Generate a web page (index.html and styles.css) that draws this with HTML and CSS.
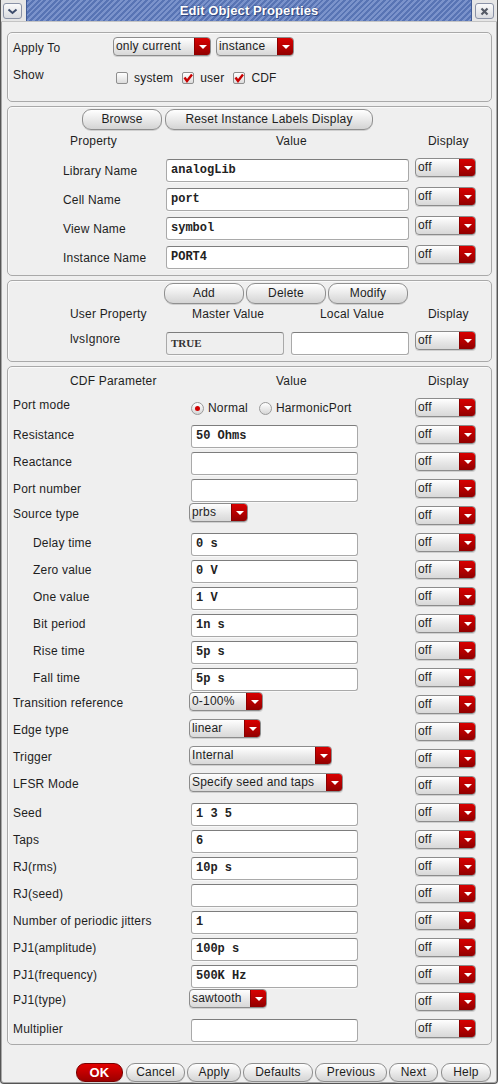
FILE: index.html
```html
<!DOCTYPE html>
<html>
<head>
<meta charset="utf-8">
<title>Edit Object Properties</title>
<link rel="stylesheet" href="styles.css">
</head>
<body>
<div class="window">
  <div class="titlebar">
    <div class="tb-side tb-left">
      <div class="tb-btn"><svg width="11" height="7" viewBox="0 0 11 7"><path d="M1.5 1.5 L5.5 5 L9.5 1.5" fill="none" stroke="#3d4c6c" stroke-width="2"/></svg></div>
    </div>
    <div class="tb-title">Edit Object Properties</div>
    <div class="tb-side tb-right">
      <div class="tb-btn"><svg width="9" height="9" viewBox="0 0 9 9"><path d="M1.5 1.5 L7.5 7.5 M7.5 1.5 L1.5 7.5" fill="none" stroke="#555a66" stroke-width="2.2"/></svg></div>
    </div>
  </div>

  <div class="content">
    <section class="box box-apply">
      <div class="a-row1">
        <div class="a-label a-label1">Apply To</div>
        <div class="dd w-only"><span class="dd-text">only current</span><span class="dd-arrow"><i></i></span></div>
        <div class="dd w-inst"><span class="dd-text">instance</span><span class="dd-arrow"><i></i></span></div>
      </div>
      <div class="a-row2">
        <div class="a-label">Show</div>
        <div class="checks">
          <label class="check"><span class="cb"></span>system</label>
          <label class="check"><span class="cb"><svg width="10" height="10" viewBox="0 0 10 10"><path d="M1.5 4.5 L4 8 L9 1.5" fill="none" stroke="#c80000" stroke-width="2.4"/></svg></span>user</label>
          <label class="check"><span class="cb"><svg width="10" height="10" viewBox="0 0 10 10"><path d="M1.5 4.5 L4 8 L9 1.5" fill="none" stroke="#c80000" stroke-width="2.4"/></svg></span>CDF</label>
        </div>
      </div>
    </section>

    <section class="box box-prop">
      <div class="btnrow btnrow-prop">
        <div class="btn w-browse">Browse</div>
        <div class="btn w-reset">Reset Instance Labels Display</div>
      </div>
      <div class="hdr hdr-prop">
        <span class="h1">Property</span><span class="h2">Value</span><span class="h3">Display</span>
      </div>
      <div class="prow">
        <div class="plabel">Library Name</div>
        <div class="field pfield">analogLib</div>
        <div class="dd dd-disp"><span class="dd-text">off</span><span class="dd-arrow"><i></i></span></div>
      </div>
      <div class="prow">
        <div class="plabel">Cell Name</div>
        <div class="field pfield">port</div>
        <div class="dd dd-disp"><span class="dd-text">off</span><span class="dd-arrow"><i></i></span></div>
      </div>
      <div class="prow">
        <div class="plabel">View Name</div>
        <div class="field pfield">symbol</div>
        <div class="dd dd-disp"><span class="dd-text">off</span><span class="dd-arrow"><i></i></span></div>
      </div>
      <div class="prow">
        <div class="plabel">Instance Name</div>
        <div class="field pfield">PORT4</div>
        <div class="dd dd-disp"><span class="dd-text">off</span><span class="dd-arrow"><i></i></span></div>
      </div>
    </section>

    <section class="box box-user">
      <div class="btnrow btnrow-user">
        <div class="btn w-80">Add</div>
        <div class="btn w-80">Delete</div>
        <div class="btn w-80">Modify</div>
      </div>
      <div class="hdr hdr-user">
        <span class="u1">User Property</span><span class="u2">Master Value</span><span class="u3">Local Value</span><span class="u4">Display</span>
      </div>
      <div class="urow">
        <div class="ulabel">lvsIgnore</div>
        <div class="field master">TRUE</div>
        <div class="field local"></div>
        <div class="dd dd-disp"><span class="dd-text">off</span><span class="dd-arrow"><i></i></span></div>
      </div>
    </section>

    <section class="box box-cdf">
      <div class="hdr hdr-cdf">
        <span class="h1">CDF Parameter</span><span class="h2">Value</span><span class="h3">Display</span>
      </div>

      <div class="row r-radio">
        <div class="lbl">Port mode</div>
        <div class="val">
          <div class="radios">
            <span class="radio"><span class="rb on"></span>Normal</span>
            <span class="radio"><span class="rb"></span>HarmonicPort</span>
          </div>
        </div>
        <div class="dd dd-disp disp"><span class="dd-text">off</span><span class="dd-arrow"><i></i></span></div>
      </div>

      <div class="row"><div class="lbl">Resistance</div><div class="val"><div class="field vfield">50 Ohms</div></div><div class="dd dd-disp disp"><span class="dd-text">off</span><span class="dd-arrow"><i></i></span></div></div>
      <div class="row"><div class="lbl">Reactance</div><div class="val"><div class="field vfield"></div></div><div class="dd dd-disp disp"><span class="dd-text">off</span><span class="dd-arrow"><i></i></span></div></div>
      <div class="row"><div class="lbl">Port number</div><div class="val"><div class="field vfield"></div></div><div class="dd dd-disp disp"><span class="dd-text">off</span><span class="dd-arrow"><i></i></span></div></div>
      <div class="row sel"><div class="lbl">Source type</div><div class="val"><div class="dd w-prbs"><span class="dd-text">prbs</span><span class="dd-arrow"><i></i></span></div></div><div class="dd dd-disp disp"><span class="dd-text">off</span><span class="dd-arrow"><i></i></span></div></div>
      <div class="row"><div class="lbl ind">Delay time</div><div class="val"><div class="field vfield">0 s</div></div><div class="dd dd-disp disp"><span class="dd-text">off</span><span class="dd-arrow"><i></i></span></div></div>
      <div class="row"><div class="lbl ind">Zero value</div><div class="val"><div class="field vfield">0 V</div></div><div class="dd dd-disp disp"><span class="dd-text">off</span><span class="dd-arrow"><i></i></span></div></div>
      <div class="row"><div class="lbl ind">One value</div><div class="val"><div class="field vfield">1 V</div></div><div class="dd dd-disp disp"><span class="dd-text">off</span><span class="dd-arrow"><i></i></span></div></div>
      <div class="row"><div class="lbl ind">Bit period</div><div class="val"><div class="field vfield">1n s</div></div><div class="dd dd-disp disp"><span class="dd-text">off</span><span class="dd-arrow"><i></i></span></div></div>
      <div class="row"><div class="lbl ind">Rise time</div><div class="val"><div class="field vfield">5p s</div></div><div class="dd dd-disp disp"><span class="dd-text">off</span><span class="dd-arrow"><i></i></span></div></div>
      <div class="row"><div class="lbl ind">Fall time</div><div class="val"><div class="field vfield">5p s</div></div><div class="dd dd-disp disp"><span class="dd-text">off</span><span class="dd-arrow"><i></i></span></div></div>
      <div class="row sel"><div class="lbl">Transition reference</div><div class="val"><div class="dd w-trans"><span class="dd-text">0-100%</span><span class="dd-arrow"><i></i></span></div></div><div class="dd dd-disp disp"><span class="dd-text">off</span><span class="dd-arrow"><i></i></span></div></div>
      <div class="row sel"><div class="lbl">Edge type</div><div class="val"><div class="dd w-linear"><span class="dd-text">linear</span><span class="dd-arrow"><i></i></span></div></div><div class="dd dd-disp disp"><span class="dd-text">off</span><span class="dd-arrow"><i></i></span></div></div>
      <div class="row sel"><div class="lbl">Trigger</div><div class="val"><div class="dd w-trig"><span class="dd-text">Internal</span><span class="dd-arrow"><i></i></span></div></div><div class="dd dd-disp disp"><span class="dd-text">off</span><span class="dd-arrow"><i></i></span></div></div>
      <div class="row sel"><div class="lbl">LFSR Mode</div><div class="val"><div class="dd w-lfsr"><span class="dd-text">Specify seed and taps</span><span class="dd-arrow"><i></i></span></div></div><div class="dd dd-disp disp"><span class="dd-text">off</span><span class="dd-arrow"><i></i></span></div></div>
      <div class="row"><div class="lbl">Seed</div><div class="val"><div class="field vfield">1 3 5</div></div><div class="dd dd-disp disp"><span class="dd-text">off</span><span class="dd-arrow"><i></i></span></div></div>
      <div class="row"><div class="lbl">Taps</div><div class="val"><div class="field vfield">6</div></div><div class="dd dd-disp disp"><span class="dd-text">off</span><span class="dd-arrow"><i></i></span></div></div>
      <div class="row"><div class="lbl">RJ(rms)</div><div class="val"><div class="field vfield">10p s</div></div><div class="dd dd-disp disp"><span class="dd-text">off</span><span class="dd-arrow"><i></i></span></div></div>
      <div class="row"><div class="lbl">RJ(seed)</div><div class="val"><div class="field vfield"></div></div><div class="dd dd-disp disp"><span class="dd-text">off</span><span class="dd-arrow"><i></i></span></div></div>
      <div class="row"><div class="lbl">Number of periodic jitters</div><div class="val"><div class="field vfield">1</div></div><div class="dd dd-disp disp"><span class="dd-text">off</span><span class="dd-arrow"><i></i></span></div></div>
      <div class="row"><div class="lbl">PJ1(amplitude)</div><div class="val"><div class="field vfield">100p s</div></div><div class="dd dd-disp disp"><span class="dd-text">off</span><span class="dd-arrow"><i></i></span></div></div>
      <div class="row"><div class="lbl">PJ1(frequency)</div><div class="val"><div class="field vfield">500K Hz</div></div><div class="dd dd-disp disp"><span class="dd-text">off</span><span class="dd-arrow"><i></i></span></div></div>
      <div class="row sel"><div class="lbl">PJ1(type)</div><div class="val"><div class="dd w-saw"><span class="dd-text">sawtooth</span><span class="dd-arrow"><i></i></span></div></div><div class="dd dd-disp disp"><span class="dd-text">off</span><span class="dd-arrow"><i></i></span></div></div>
      <div class="row"><div class="lbl">Multiplier</div><div class="val"><div class="field vfield"></div></div><div class="dd dd-disp disp"><span class="dd-text">off</span><span class="dd-arrow"><i></i></span></div></div>
    </section>

    <div class="footer">
      <div class="btn ok">OK</div>
      <div class="btn f-cancel">Cancel</div>
      <div class="btn f-apply">Apply</div>
      <div class="btn f-defaults">Defaults</div>
      <div class="btn f-prev">Previous</div>
      <div class="btn f-next">Next</div>
      <div class="btn f-help">Help</div>
    </div>
  </div>
</div>
</body>
</html>
```

FILE: styles.css
```css
* { box-sizing: border-box; }
html, body { margin: 0; padding: 0; }
body {
  width: 498px;
  height: 1084px;
  background: #efefef;
  font-family: "Liberation Sans", Arial, sans-serif;
  font-size: 12px;
  letter-spacing: 0.2px;
  color: #1e1e1e;
  overflow: hidden;
}
.window {
  width: 498px;
  height: 1084px;
  border: 1px solid #555;
  border-top: none;
  border-radius: 0 0 4px 4px;
  background: #efefef;
  box-shadow: inset 1px 0 0 #a8a8a8, inset -1px 0 0 #a8a8a8, inset 0 -1px 0 #a8a8a8;
}

/* title bar */
.titlebar {
  display: flex;
  height: 22px;
  border-bottom: 1px solid #c4c4c4;
  background: #e6e6e6;
}
.tb-side { width: 25px; display: flex; align-items: flex-start; padding-top: 3px; }
.tb-left { padding-left: 2px; }
.tb-right { width: 25px; padding-left: 3px; }
.tb-btn {
  width: 19px; height: 16px;
  border: 1px solid #8a92a6;
  border-radius: 3px;
  background: linear-gradient(#fafafa, #d9dbe0);
  display: flex; align-items: center; justify-content: center;
}
.tb-title {
  flex: 1;
  height: 21px;
  background: repeating-linear-gradient(135deg, #5874b4 0 2px, #7b93cb 2px 4px);
  border-left: 1px solid #3f5a96;
  border-right: 1px solid #3f5a96;
  color: #fff;
  font-weight: bold;
  font-size: 13px;
  letter-spacing: 0.1px;
  text-align: center;
  line-height: 22px;
  text-shadow: 0 0 2px #2c4178, 1px 1px 0 #334b86;
}

.content { padding: 10px 5px 0 6px; }

.box {
  border: 1px solid #a9a9a9;
  border-radius: 5px;
  box-shadow: inset 1px 1px 0 #fafafa;
  margin-bottom: 4px;
}
.box-apply { height: 70px; padding-top: 4px; }
.box-prop { height: 170px; }
.box-user { height: 82px; }
.box-cdf { height: 679px; }

/* apply section */
.a-row1 { display: flex; height: 19px; gap: 5px; }
.a-label { width: 105px; padding-left: 5px; line-height: 18px; flex: none; }
.a-row1 .a-label { width: 100px; padding-top: 2px; }
.a-row2 { display: flex; margin-top: 10px; height: 24px; }
.checks { display: flex; margin-top: 3px; height: 18px; align-items: center; padding-left: 3px; }
.check { display: flex; align-items: center; gap: 6px; margin-right: 9px; }
.cb {
  width: 12px; height: 12px;
  border: 1px solid #8e8e8e;
  border-radius: 2px;
  background: linear-gradient(#ffffff, #dcdcdc);
  display: flex; align-items: center; justify-content: center;
}

/* dropdowns */
.dd {
  display: flex;
  height: 19px;
  border: 1px solid #8c8c8c;
  border-radius: 4px;
  background: linear-gradient(#ffffff, #e6e6e6 60%, #d8d8d8);
  overflow: hidden;
  flex: none;
  box-shadow: 0 1px 0 #d0d0d0;
}
.dd-text { flex: 1; padding-left: 2px; line-height: 16px; white-space: nowrap; overflow: hidden; }
.dd-arrow {
  width: 16px;
  background: linear-gradient(#d80000, #b00000 60%, #900000);
  display: flex; align-items: center; justify-content: center;
  border-left: 1px solid #8a0000;
}
.dd-arrow i {
  width: 0; height: 0;
  border-left: 4px solid transparent;
  border-right: 4px solid transparent;
  border-top: 4px solid #fff;
}
.w-only { width: 98px; }
.w-inst { width: 78px; }
.dd-disp { width: 61px; }
.w-prbs { width: 59px; }
.w-trans { width: 74px; }
.w-linear { width: 72px; }
.w-trig { width: 143px; }
.w-lfsr { width: 154px; }
.w-saw { width: 78px; }

/* buttons */
.btn {
  height: 21px;
  border: 1px solid #8f8f8f;
  border-radius: 9px;
  background: linear-gradient(#ffffff, #ececec 45%, #d4d4d4);
  text-align: center;
  line-height: 19px;
  flex: none;
  box-shadow: 0 1px 0 #cfcfcf;
}
.btnrow { display: flex; gap: 3px; margin-top: 2px; }
.btnrow-prop { padding-left: 74px; }
.w-browse { width: 80px; }
.w-reset { width: 208px; }
.btnrow-user { padding-left: 156px; gap: 2px; }
.w-80 { width: 80px; }

/* text fields */
.field {
  height: 23px;
  border: 1px solid #a9a9a9;
  border-top-color: #7d7d7d;
  border-radius: 3px;
  background: #fff;
  font-family: "Liberation Mono", "DejaVu Sans Mono", monospace;
  font-weight: bold;
  font-size: 12px;
  letter-spacing: 0;
  color: #222;
  padding-left: 4px;
  line-height: 21px;
  flex: none;
  box-shadow: 0 1px 0 #f8f8f8;
}

/* headers */
.hdr { display: flex; }
.hdr-prop { height: 26px; line-height: 22px; }
.hdr .h1 { width: 268px; padding-left: 62px; }
.hdr .h2 { width: 152px; }
.hdr-cdf { height: 29px; line-height: 28px; }

/* property rows */
.prow { display: flex; height: 29px; align-items: center; }
.plabel { width: 158px; padding-left: 55px; flex: none; }
.pfield { width: 243px; }
.prow .dd-disp { margin-left: 6px; align-self: flex-start; margin-top: 2px; }

/* user property */
.hdr-user { height: 26px; line-height: 20px; }
.hdr-user .u1 { width: 184px; padding-left: 62px; }
.hdr-user .u2 { width: 128px; }
.hdr-user .u3 { width: 108px; }
.urow { display: flex; height: 28px; align-items: flex-start; }
.ulabel { width: 158px; padding-left: 62px; line-height: 18px; flex: none; }
.master {
  width: 118px; margin-top: 2px;
  background: #efefef;
  font-family: "Liberation Serif", serif;
  font-size: 11px;
  color: #333;
}
.local { width: 118px; margin-top: 2px; margin-left: 7px; }
.urow .dd-disp { margin-left: 6px; margin-top: 1px; }

/* cdf rows */
.row { display: flex; height: 27px; align-items: flex-start; }
.lbl { width: 181px; padding-left: 5px; line-height: 18px; margin-top: 3px; flex: none; white-space: nowrap; }
.row.sel .lbl { margin-top: 1px; }
.row.r-radio .lbl { margin-top: 0; }
.lbl.ind { padding-left: 25px; }
.val { width: 226px; flex: none; }
.vfield { width: 167px; margin-top: 2px; margin-left: 2px; }
.val .dd { margin-top: -1px; }
.disp { margin-top: 2px; }

.radios { display: flex; margin-top: 2px; margin-left: 2px; height: 20px; align-items: center; }
.radio { display: flex; align-items: center; gap: 4px; margin-right: 11px; }
.rb {
  width: 13px; height: 13px;
  border: 1px solid #9a9a9a;
  border-radius: 50%;
  background: linear-gradient(#ffffff, #d6d6d6);
  display: flex; align-items: center; justify-content: center;
}
.rb.on::after {
  content: "";
  width: 5px; height: 5px;
  border-radius: 50%;
  background: #d00000;
}

/* footer */
.footer {
  display: flex;
  justify-content: flex-end;
  gap: 2px;
  padding-top: 14px;
  padding-right: 1px;
}
.footer .btn { height: 19px; line-height: 17px; }
.ok {
  width: 47px;
  margin-right: 1px;
  background: linear-gradient(#e20000, #c00000 50%, #9c0000);
  border-color: #7a0000;
  color: #fff;
  font-weight: bold;
  font-size: 13px;
}
.f-cancel { width: 59px; }
.f-apply { width: 54px; }
.f-defaults { width: 70px; }
.f-prev { width: 72px; }
.f-next { width: 49px; margin-right: 1px; }
.f-help { width: 50px; }
```
